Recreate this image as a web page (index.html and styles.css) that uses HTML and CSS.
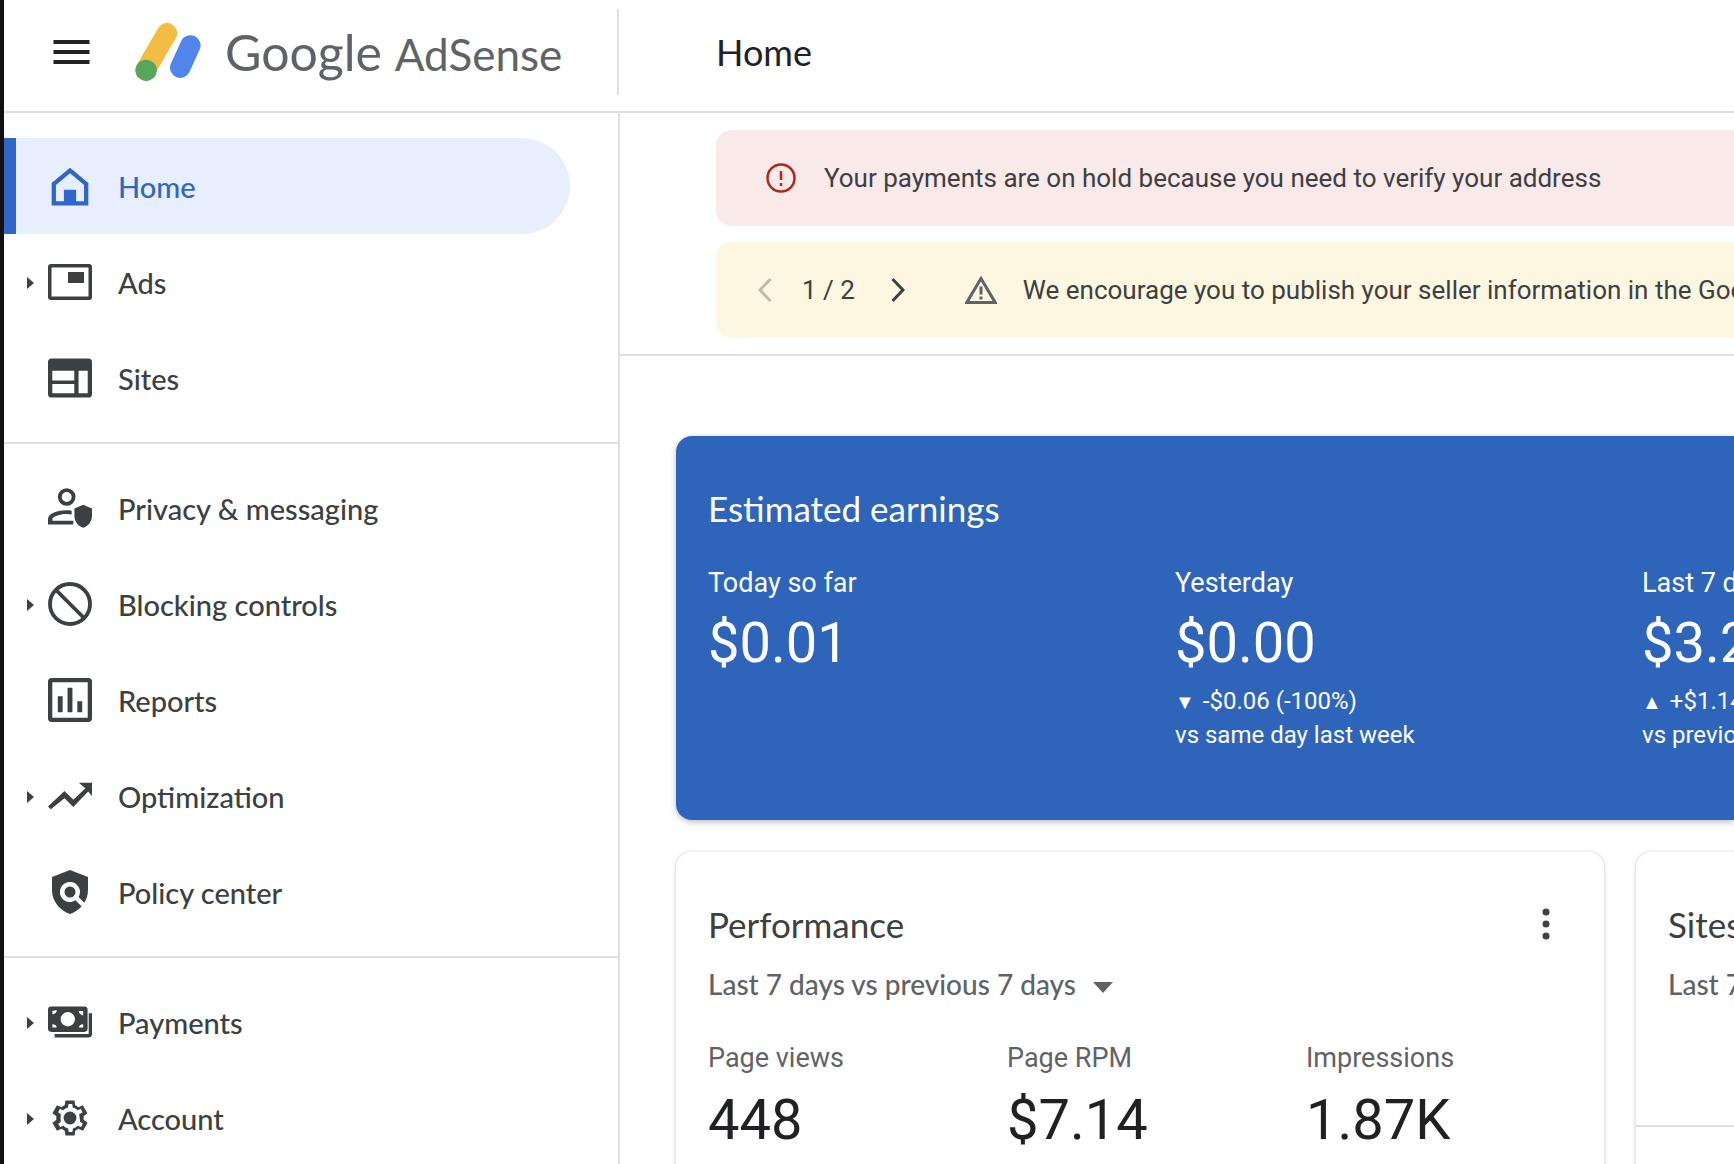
FILE: index.html
```html
<!DOCTYPE html>
<html lang="en">
<head>
    <meta charset="UTF-8">
    <meta name="viewport" content="width=device-width, initial-scale=1.0">
    <title>Google AdSense - Home</title>
    <link rel="stylesheet" href="styles.css">
</head>
<body>
    <!-- Top bar -->
    <header class="topbar">
        <div class="brand">
            <svg class="menu-icon" viewBox="0 0 36 24">
                <path d="M0 0h36v4H0zM0 10h36v4H0zM0 20h36v4H0z"/>
            </svg>
            <svg class="logo" viewBox="0 0 64 57">
                <line x1="47" y1="13" x2="37" y2="35" class="logo-blue" transform="translate(7 9)"/>
                <line x1="31" y1="10" x2="10" y2="46" class="logo-yellow"/>
                <circle cx="10.500" cy="46.500" r="10.500" class="logo-green"/>
            </svg>
            <div class="brand-name">Google <span class="brand-product">AdSense</span></div>
        </div>
        <div class="page-title">Home</div>
    </header>

    <div class="layout">
        <!-- Sidebar -->
        <nav class="sidebar">
            <div class="nav-group">
                <a class="nav-item active">
                    <svg class="nav-icon" viewBox="0 0 36 36"><path d="M18 3 3 15.500V34h30V15.500zM6.500 30.500V17.200L18 7.600l11.500 9.600v13.300H23V21H13v9.500z"/></svg>
                    <span>Home</span>
                </a>
                <a class="nav-item has-children">
                    <svg class="nav-icon" viewBox="0 0 44 36"><path d="M3 0h38a3 3 0 0 1 3 3v30a3 3 0 0 1-3 3H3a3 3 0 0 1-3-3V3a3 3 0 0 1 3-3zm.500 3.500v29h37v-29zM20 8h16v11H20z"/></svg>
                    <span>Ads</span>
                </a>
                <a class="nav-item">
                    <svg class="nav-icon" viewBox="0 0 36 32"><path d="M3 0h30a3 3 0 0 1 3 3v26a3 3 0 0 1-3 3H3a3 3 0 0 1-3-3V3a3 3 0 0 1 3-3zm.500 10v8h18v-8zm21.500 0v18.500h7.500V10zM3.500 21v7.500h18V21z" fill-rule="evenodd"/></svg>
                    <span>Sites</span>
                </a>
            </div>
            <div class="nav-group">
                <a class="nav-item">
                    <svg class="nav-icon" viewBox="0 0 40 36"><path d="M17 0a8 8 0 1 1 0 16 8 8 0 0 1 0-16zm0 3.500a4.500 4.500 0 1 0 0 9 4.500 4.500 0 0 0 0-9zM0 33v-5c0-5 9-8 17-8 1.600 0 3 .1 4.500.4v3.600c-1.500-.3-3-.5-4.500-.5-6.500 0-13 2.500-13 4.500v1.500h19V33zM32 15l8 3.500v6.500c0 5-3.300 9.400-8 11-4.700-1.600-8-6-8-11v-6.500z"/></svg>
                    <span>Privacy &amp; messaging</span>
                </a>
                <a class="nav-item has-children">
                    <svg class="nav-icon" viewBox="0 0 40 40"><circle cx="20" cy="20" r="18.200" class="icon-line"/><path d="M7.500 7.500l25 25" class="icon-line"/></svg>
                    <span>Blocking controls</span>
                </a>
                <a class="nav-item">
                    <svg class="nav-icon" viewBox="0 0 36 36"><path d="M3 0h30a3 3 0 0 1 3 3v30a3 3 0 0 1-3 3H3a3 3 0 0 1-3-3V3a3 3 0 0 1 3-3zm.500 3.500v29h29v-29zM8 15h4v13H8zM16 8h4v20h-4zM24 19h4v9h-4z"/></svg>
                    <span>Reports</span>
                </a>
                <a class="nav-item has-children">
                    <svg class="nav-icon" viewBox="0 0 40 24"><path d="M28 0h12v12l-3.500-4L23 22l-8-8L2.500 24 0 21.500 15 7.500l8 8L34 5z"/></svg>
                    <span>Optimization</span>
                </a>
                <a class="nav-item">
                    <svg class="nav-icon" viewBox="0 0 36 44"><path d="M18 0 36 7v13c0 11-7.500 20.500-18 24C7.500 40.500 0 31 0 20V7zm0 12a10 10 0 1 0 5.500 18.300l6 6 2.800-3.500-5.800-5.700A10 10 0 0 0 18 12zm0 4.500a5.500 5.500 0 1 1 0 11 5.500 5.500 0 0 1 0-11z" fill-rule="evenodd"/></svg>
                    <span>Policy center</span>
                </a>
            </div>
            <div class="nav-group">
                <a class="nav-item has-children">
                    <svg class="nav-icon" viewBox="0 0 40 28"><path d="M3 0h30a3 3 0 0 1 3 3v17a3 3 0 0 1-3 3H3a3 3 0 0 1-3-3V3a3 3 0 0 1 3-3zm1 4v3a4 4 0 0 0 4-4zm24 0a4 4 0 0 0 4 4V4zM4 16v3h4a4 4 0 0 0-4-3zm28 0a4 4 0 0 0-4 3h4zM18 5a6.500 6.500 0 1 0 0 13 6.500 6.500 0 0 0 0-13zM37 6h3v19a3 3 0 0 1-3 3H6v-3h31z" fill-rule="evenodd"/></svg>
                    <span>Payments</span>
                </a>
                <a class="nav-item has-children">
                    <svg class="nav-icon" viewBox="0 0 24 24"><path d="M12 8.500a3.500 3.500 0 1 0 0 7 3.500 3.500 0 0 0 0-7zM19.400 13c0-.3.100-.7.100-1s0-.7-.1-1l2.100-1.600-2.500-4.300-2.500 1c-.5-.4-1.100-.7-1.700-1L14.500 2.400h-5l-.4 2.700c-.6.300-1.200.6-1.700 1l-2.500-1L2.400 9.400 4.600 11c0 .3-.1.700-.1 1s0 .7.1 1l-2.200 1.600 2.500 4.300 2.500-1c.5.400 1.100.7 1.700 1l.4 2.700h5l.4-2.700c.6-.3 1.200-.6 1.700-1l2.500 1 2.500-4.300zM17.500 14l1.500 1.200-1 1.700-1.800-.7c-.8.700-1.600 1.200-2.600 1.500l-.3 1.900h-2l-.3-1.900c-1-.3-1.800-.8-2.600-1.500l-1.800.7-1-1.700L7 14c-.2-1.300-.2-2.700 0-4L5.500 8.800l1-1.700 1.800.7c.8-.7 1.600-1.200 2.600-1.500l.3-1.900h2l.3 1.900c1 .3 1.800.8 2.600 1.500l1.800-.7 1 1.700L17 10c.3 1.300.3 2.700.5 4z"/></svg>
                    <span>Account</span>
                </a>
            </div>
        </nav>

        <main class="content">
            <!-- Alerts -->
            <section class="alerts">
                <div class="alert alert-error">
                    <svg class="alert-icon" viewBox="0 0 30 30">
                        <circle cx="15" cy="15" r="13.500"/>
                        <path d="M15 8v9M15 20v3"/>
                    </svg>
                    <span>Your payments are on hold because you need to verify your address</span>
                </div>
                <div class="alert alert-warning">
                    <svg class="pager-arrow pager-off" viewBox="0 0 14 26"><path d="M12.500 2 2 13l10.500 11"/></svg>
                    <span class="pager-count">1 / 2</span>
                    <svg class="pager-arrow" viewBox="0 0 14 26"><path d="M1.500 2 12 13 1.500 24"/></svg>
                    <svg class="warn-icon" viewBox="0 0 32 28">
                        <path d="M16 2.500 1.800 26.500h28.400z"/>
                        <path d="M16 10.500v8M16 20.500v3"/>
                    </svg>
                    <span>We encourage you to publish your seller information in the Google sellers.json file</span>
                </div>
            </section>

            <section class="dashboard">
                <!-- Estimated earnings -->
                <div class="earnings">
                    <h2 class="earnings-title">Estimated earnings</h2>
                    <div class="earnings-grid">
                        <div>
                            <div class="earn-label">Today so far</div>
                            <div class="earn-value">$0.01</div>
                        </div>
                        <div>
                            <div class="earn-label">Yesterday</div>
                            <div class="earn-value">$0.00</div>
                            <div class="earn-note"><span class="arrow">▼</span>-$0.06 (-100%)</div>
                            <div class="earn-note">vs same day last week</div>
                        </div>
                        <div>
                            <div class="earn-label">Last 7 days</div>
                            <div class="earn-value">$3.20</div>
                            <div class="earn-note"><span class="arrow">▲</span>+$1.14 (+55%)</div>
                            <div class="earn-note">vs previous 7 days</div>
                        </div>
                    </div>
                </div>

                <div class="cards">
                    <div class="card">
                        <div class="card-head">
                            <h2 class="card-title">Performance</h2>
                            <svg class="kebab" viewBox="0 0 8 32"><circle cx="4" cy="4" r="3.500"/><circle cx="4" cy="16" r="3.500"/><circle cx="4" cy="28" r="3.500"/></svg>
                        </div>
                        <div class="range">Last 7 days vs previous 7 days <span class="caret"></span></div>
                        <div class="stats">
                            <div>
                                <div class="stat-label">Page views</div>
                                <div class="stat-value">448</div>
                            </div>
                            <div>
                                <div class="stat-label">Page RPM</div>
                                <div class="stat-value">$7.14</div>
                            </div>
                            <div>
                                <div class="stat-label">Impressions</div>
                                <div class="stat-value">1.87K</div>
                            </div>
                        </div>
                    </div>
                    <div class="card card-sites">
                        <h2 class="card-title">Sites</h2>
                        <div class="range">Last 7 days</div>
                        <div class="card-rule"></div>
                    </div>
                </div>
            </section>
        </main>
    </div>
</body>
</html>
```

FILE: styles.css
```css
* {
    margin: 0;
    padding: 0;
    box-sizing: border-box;
}

html, body {
    height: 100%;
}

body {
    overflow: hidden;
    background: #fff;
    border-left: 4px solid #111;
    font-family: 'Roboto', sans-serif;
    color: #3c4043;
}

/* Top bar */
.topbar {
    display: flex;
    align-items: center;
    height: 113px;
    border-bottom: 2px solid #dfe0e5;
}

.brand {
    display: flex;
    align-items: center;
    width: 615px;
    height: 86px;
    margin-top: -8px;
    padding-left: 49px;
    border-right: 2px solid #dfe0e5;
}

.menu-icon {
    width: 37px;
    height: 24px;
    fill: #202124;
    flex: none;
}

.logo {
    width: 66px;
    height: 58px;
    margin-left: 45px;
    flex: none;
}

.logo line {
    stroke-width: 20px;
    stroke-linecap: round;
}

.logo-blue { stroke: #5085ec; }
.logo-yellow { stroke: #f2bd42; }
.logo-green { fill: #58a65c; }

.brand-name {
    margin-left: 24px;
    font-family: 'Lato', sans-serif;
    font-size: 50px;
    color: #5f6368;
    white-space: nowrap;
}

.brand-product {
    font-size: 44px;
}

.page-title {
    margin-left: 97px;
    margin-top: -8px;
    font-family: 'Lato', sans-serif;
    font-size: 36px;
    color: #202124;
}

.layout {
    display: flex;
    height: calc(100% - 113px);
}

/* Sidebar */
.sidebar {
    width: 616px;
    flex: none;
    padding-top: 25px;
    border-right: 2px solid #dfe0e5;
}

.nav-group {
    padding-bottom: 16px;
    margin-bottom: 16px;
    border-bottom: 2px solid #dfe0e5;
}

.nav-group:last-child {
    border-bottom: none;
}

.nav-item {
    position: relative;
    display: flex;
    align-items: center;
    width: 566px;
    height: 96px;
    padding-left: 114px;
    font-family: 'Lato', sans-serif;
    font-size: 29px;
    font-weight: 500;
    color: #3c4043;
}

.nav-item .nav-icon {
    position: absolute;
    left: 44px;
    top: 50%;
    transform: translateY(-50%);
    width: 44px;
    height: 44px;
    fill: #3c4043;
}

.icon-line {
    fill: none;
    stroke: #3c4043;
    stroke-width: 3.500px;
}

.nav-item.active {
    background: #e8effc;
    border-left: 12px solid #2f66c9;
    border-radius: 0 48px 48px 0;
    padding-left: 102px;
    color: #2f66c9;
}

.nav-item.active .nav-icon {
    left: 32px;
    fill: #2f66c9;
}

/* Small triangle in front of expandable items */
.has-children::before {
    content: '';
    position: absolute;
    left: 23px;
    top: 50%;
    margin-top: -5px;
    border-left: 7px solid #3c4043;
    border-top: 6px solid transparent;
    border-bottom: 6px solid transparent;
}

/* Main column */
.content {
    flex: 1;
    min-width: 0;
    overflow: hidden;
}

.alerts {
    padding: 17px 0 16px 96px;
    border-bottom: 2px solid #dfe0e5;
}

.alert {
    display: flex;
    align-items: center;
    height: 96px;
    padding-left: 50px;
    border-radius: 16px 0 0 16px;
    font-size: 26px;
    white-space: nowrap;
    overflow: hidden;
}

.alert + .alert {
    margin-top: 16px;
}

.alert-error {
    background: #f9e9e8;
}

.alert-warning {
    background: #fdf6e0;
    padding-left: 42px;
}

.alert-icon {
    width: 30px;
    height: 30px;
    margin-right: 28px;
    flex: none;
    fill: none;
    stroke: #b3261e;
    stroke-width: 2.500px;
}

.pager-arrow {
    width: 14px;
    height: 26px;
    flex: none;
    fill: none;
    stroke: #3c4043;
    stroke-width: 3px;
}

.pager-off {
    stroke: #bdbbb0;
}

.pager-count {
    margin: 0 36px 0 30px;
}

.warn-icon {
    width: 32px;
    height: 28px;
    margin: 0 26px 0 60px;
    flex: none;
    fill: none;
    stroke: #5f6368;
    stroke-width: 3px;
}

.dashboard {
    padding: 80px 0 0 56px;
}

/* Estimated earnings */
.earnings {
    height: 384px;
    padding: 50px 0 0 32px;
    background: #2e65ba;
    border-radius: 16px 0 0 16px;
    box-shadow: 0 2px 6px rgba(60, 64, 67, 0.35);
    color: #fff;
    white-space: nowrap;
    overflow: hidden;
}

.earnings-title {
    font-family: 'Lato', sans-serif;
    font-size: 35px;
    font-weight: 400;
    line-height: 44px;
}

.earnings-grid {
    display: grid;
    grid-template-columns: repeat(3, 467px);
    margin-top: 35px;
}

.earn-label {
    font-size: 27px;
    line-height: 36px;
}

.earn-value {
    margin-top: 10px;
    font-size: 56px;
    line-height: 64px;
}

.earn-note {
    font-size: 24px;
    line-height: 33px;
}

.earn-value + .earn-note {
    margin-top: 10px;
}

.arrow {
    margin-right: 8px;
    font-size: 20px;
}

/* Cards */
.cards {
    display: flex;
    gap: 32px;
    margin-top: 32px;
}

.card {
    flex: none;
    width: 928px;
    height: 400px;
    padding: 48px 32px 0;
    background: #fff;
    border-radius: 16px;
    box-shadow: 0 1px 5px rgba(60, 64, 67, 0.3);
}

.card-sites {
    position: relative;
    width: 400px;
}

.card-head {
    display: flex;
    align-items: center;
    justify-content: space-between;
    padding-right: 22px;
}

.card-title {
    font-family: 'Lato', sans-serif;
    font-size: 35px;
    font-weight: 400;
    line-height: 48px;
    color: #3c4043;
}

.kebab {
    width: 8px;
    height: 32px;
    fill: #3c4043;
}

.range {
    margin-top: 16px;
    font-family: 'Lato', sans-serif;
    font-size: 28px;
    font-weight: 500;
    line-height: 40px;
    color: #5f6368;
    white-space: nowrap;
}

.caret {
    display: inline-block;
    margin-left: 10px;
    border-top: 11px solid #5f6368;
    border-left: 10px solid transparent;
    border-right: 10px solid transparent;
    vertical-align: middle;
}

.stats {
    display: grid;
    grid-template-columns: repeat(3, 299px);
    margin-top: 36px;
}

.stat-label {
    font-size: 27px;
    line-height: 36px;
    color: #5f6368;
}

.stat-value {
    margin-top: 12px;
    font-size: 56px;
    line-height: 64px;
    color: #202124;
}

.card-rule {
    position: absolute;
    left: 0;
    right: 0;
    top: 273px;
    height: 2px;
    background: #dfe0e5;
}
```
